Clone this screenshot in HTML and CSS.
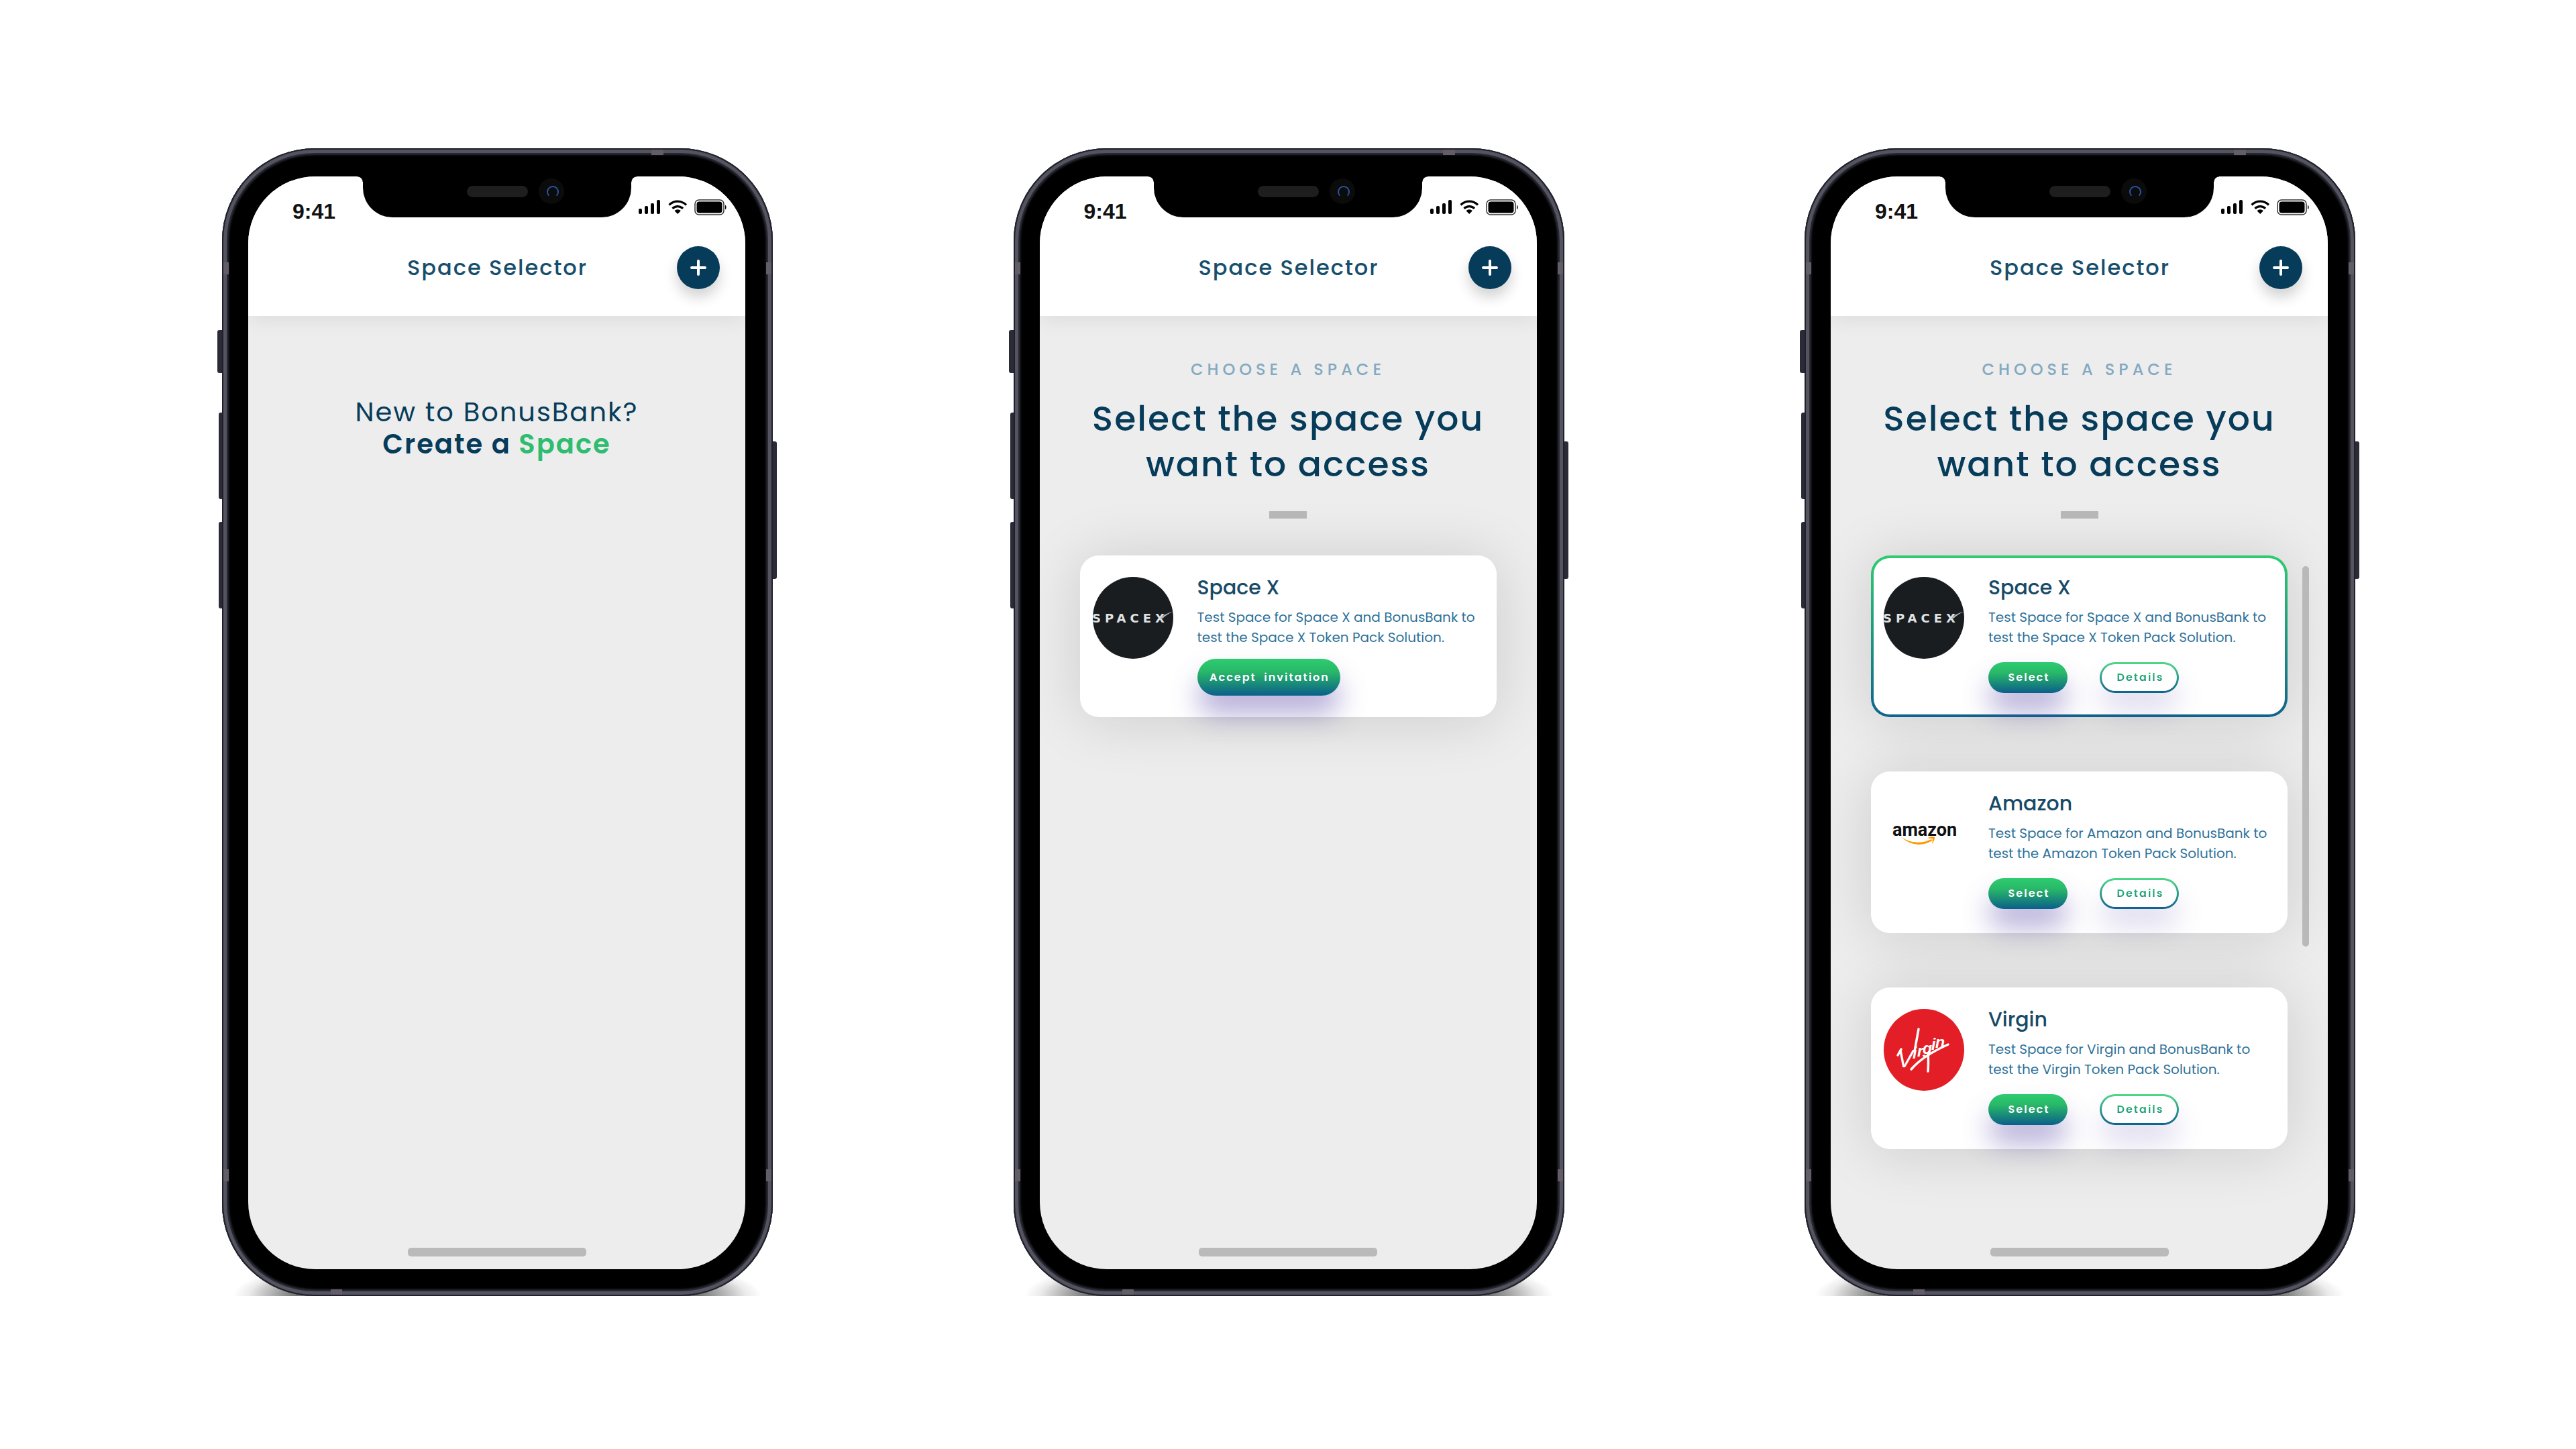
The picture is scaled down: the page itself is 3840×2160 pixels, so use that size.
FILE: index.html
```html
<!DOCTYPE html>
<html lang="en">
<head>
<meta charset="utf-8">
<meta name="viewport" content="width=device-width, initial-scale=1">
<title>Space Selector</title>
<link rel="stylesheet" href="styles.css">
</head>
<body>
<svg class="sprite" aria-hidden="true">
  <defs>
    <symbol id="status-icons" viewBox="0 0 134 26">
      <rect x="1" y="14" width="5" height="8" rx="2"/>
      <rect x="10" y="10" width="5" height="12" rx="2"/>
      <rect x="19" y="6" width="5" height="16" rx="2"/>
      <rect x="28" y="1" width="5" height="21" rx="2"/>
      <path d="M46.500 8.500a18 18 0 0 1 25.500 0M51.500 13.800a11 11 0 0 1 15.500 0" fill="none" stroke="#000" stroke-width="3.200"/>
      <path d="M59.200 22l-4.700-4.700a6.600 6.600 0 0 1 9.400 0z"/>
      <rect x="85" y="1" width="43" height="22" rx="6" fill="none" stroke="#333" stroke-width="1.500"/>
      <rect x="87.500" y="3.500" width="38" height="17" rx="4"/>
      <path d="M130 8.500a4.500 4.500 0 0 1 0 7z"/>
    </symbol>
    <symbol id="plus" viewBox="0 0 24 24">
      <path d="M12 2v20M2 12h20" fill="none" stroke="#fff" stroke-width="4" stroke-linecap="round"/>
    </symbol>
    <clipPath id="disc"><ellipse cx="60" cy="61" rx="60" ry="61"/></clipPath>
    <symbol id="logo-spacex" viewBox="0 0 120 122">
      <g clip-path="url(#disc)">
        <rect width="120" height="122" fill="#191d20"/>
        <text x="-1" y="68" class="logo-text-spacex">SPACEX</text>
        <path d="M100 62Q106 55 120 51.500Q110 56 104 62Z" fill="#aab0b3"/>
      </g>
    </symbol>
    <symbol id="logo-amazon" viewBox="0 0 120 122">
      <text x="13" y="64" class="logo-text-amazon">amazon</text>
      <path d="M26 66Q48 80 71 69L72.500 71Q48 85 26 66Z" fill="#f90"/>
      <path d="M65 67.500Q71 64 76 66Q76 71 72 76Q73 71 73 68.500Q70 67.500 65 67.500Z" fill="#f90"/>
    </symbol>
    <symbol id="logo-virgin" viewBox="0 0 120 122">
      <ellipse cx="60" cy="61" rx="60" ry="61" fill="#e31e26"/>
      <text x="20 43 50 58 71 77" y="87 74 71 67 61 58" class="logo-text-virgin"><tspan class="logo-initial">V</tspan>irgin</text>
      <path d="M41 90Q58 70 96 53M66 66Q67 78 66 93M46 63L52 30M21 69L26 60" fill="none" stroke="#fff" stroke-width="3.500" stroke-linecap="round"/>
    </symbol>
  </defs>
</svg>

<main class="stage">
  <section class="phone">
    <i class="floor-shadow"></i>
    <i class="key key-mute"></i><i class="key key-up"></i><i class="key key-down"></i><i class="key key-power"></i>
    <div class="frame">
      <i class="band band-left-top"></i><i class="band band-right-top"></i><i class="band band-left-low"></i><i class="band band-right-low"></i><i class="band band-top"></i><i class="band band-bottom"></i>
      <div class="screen">
        <div class="notch"><i class="speaker"></i><i class="camera"></i></div>
        <header class="topbar">
          <div class="status"><span>9:41</span><svg class="status-icons" aria-hidden="true"><use href="#status-icons"/></svg></div>
          <div class="nav"><h1>Space Selector</h1><button class="add" type="button" aria-label="Add space"><svg aria-hidden="true"><use href="#plus"/></svg></button></div>
        </header>
        <div class="content welcome">
          <p>New to BonusBank?</p>
          <p class="strong">Create a <a href="#create">Space</a></p>
        </div>
        <i class="home"></i>
      </div>
    </div>
  </section>

  <section class="phone">
    <i class="floor-shadow"></i>
    <i class="key key-mute"></i><i class="key key-up"></i><i class="key key-down"></i><i class="key key-power"></i>
    <div class="frame">
      <i class="band band-left-top"></i><i class="band band-right-top"></i><i class="band band-left-low"></i><i class="band band-right-low"></i><i class="band band-top"></i><i class="band band-bottom"></i>
      <div class="screen">
        <div class="notch"><i class="speaker"></i><i class="camera"></i></div>
        <header class="topbar">
          <div class="status"><span>9:41</span><svg class="status-icons" aria-hidden="true"><use href="#status-icons"/></svg></div>
          <div class="nav"><h1>Space Selector</h1><button class="add" type="button" aria-label="Add space"><svg aria-hidden="true"><use href="#plus"/></svg></button></div>
        </header>
        <div class="content">
          <p class="eyebrow">CHOOSE A SPACE</p>
          <h2>Select the space you<br>want to access</h2>
          <hr>
          <div class="cards">
            <article class="card">
              <svg class="logo" role="img" aria-label="SpaceX"><use href="#logo-spacex"/></svg>
              <div class="info">
                <h3>Space X</h3>
                <p>Test Space for Space X and BonusBank to<br>test the Space X Token Pack Solution.</p>
                <div class="actions"><button class="btn accept" type="button">Accept  invitation</button></div>
              </div>
            </article>
          </div>
        </div>
        <i class="home"></i>
      </div>
    </div>
  </section>

  <section class="phone">
    <i class="floor-shadow"></i>
    <i class="key key-mute"></i><i class="key key-up"></i><i class="key key-down"></i><i class="key key-power"></i>
    <div class="frame">
      <i class="band band-left-top"></i><i class="band band-right-top"></i><i class="band band-left-low"></i><i class="band band-right-low"></i><i class="band band-top"></i><i class="band band-bottom"></i>
      <div class="screen">
        <div class="notch"><i class="speaker"></i><i class="camera"></i></div>
        <header class="topbar">
          <div class="status"><span>9:41</span><svg class="status-icons" aria-hidden="true"><use href="#status-icons"/></svg></div>
          <div class="nav"><h1>Space Selector</h1><button class="add" type="button" aria-label="Add space"><svg aria-hidden="true"><use href="#plus"/></svg></button></div>
        </header>
        <div class="content">
          <p class="eyebrow">CHOOSE A SPACE</p>
          <h2>Select the space you<br>want to access</h2>
          <hr>
          <div class="cards">
            <article class="card selected">
              <svg class="logo" role="img" aria-label="SpaceX"><use href="#logo-spacex"/></svg>
              <div class="info">
                <h3>Space X</h3>
                <p>Test Space for Space X and BonusBank to<br>test the Space X Token Pack Solution.</p>
                <div class="actions"><button class="btn" type="button">Select</button><button class="btn outline" type="button"><span>Details</span></button></div>
              </div>
            </article>
            <article class="card">
              <svg class="logo" role="img" aria-label="Amazon"><use href="#logo-amazon"/></svg>
              <div class="info">
                <h3>Amazon</h3>
                <p>Test Space for Amazon and BonusBank to<br>test the Amazon Token Pack Solution.</p>
                <div class="actions"><button class="btn" type="button">Select</button><button class="btn outline" type="button"><span>Details</span></button></div>
              </div>
            </article>
            <article class="card">
              <svg class="logo" role="img" aria-label="Virgin"><use href="#logo-virgin"/></svg>
              <div class="info">
                <h3>Virgin</h3>
                <p>Test Space for Virgin and BonusBank to<br>test the Virgin Token Pack Solution.</p>
                <div class="actions"><button class="btn" type="button">Select</button><button class="btn outline" type="button"><span>Details</span></button></div>
              </div>
            </article>
            <i class="scrollbar"></i>
          </div>
        </div>
        <i class="home"></i>
      </div>
    </div>
  </section>
</main>
</body>
</html>
```
FILE: styles.css
```css
* { box-sizing: border-box; }

body {
  margin: 0;
  background: #fff;
  color: #063c5a;
  font-family: Poppins, Inter, "Liberation Sans", sans-serif;
}

h1, h2, h3, p { margin: 0; font-weight: 500; }

button { margin: 0; padding: 0; border: 0; font-family: inherit; cursor: pointer; }

.sprite { position: absolute; width: 0; height: 0; }

.stage {
  display: grid;
  grid-template-columns: repeat(3, minmax(0, 821px));
  justify-content: space-between;
  padding: 221px 329px 221px 331px;
}

/* Device */
.phone { position: relative; isolation: isolate; aspect-ratio: 821 / 1711; display: flex; }

.floor-shadow {
  position: absolute;
  z-index: -1;
  left: 16px;
  right: 16px;
  bottom: 0;
  height: 70px;
  background: radial-gradient(ellipse 50% 100% at 50% 100%, rgba(0, 0, 0, .55) 76%, rgba(0, 0, 0, .08) 94%, transparent 100%);
}

.frame {
  position: relative;
  flex: 1;
  display: flex;
  padding: 42px 41px 40px 39px;
  border-radius: 138px;
  background: #000;
  box-shadow: inset 0 0 0 2px #20202a, inset 0 0 0 7px #545360, inset 0 0 3px 10px #2c2c37;
}

.key { position: absolute; z-index: -1; width: 12px; background: #2a2b36; border-radius: 3px; }
.key-mute { left: -7px; top: 271px; height: 64px; }
.key-up { left: -5px; top: 394px; height: 129px; }
.key-down { left: -5px; top: 557px; height: 129px; }
.key-power { right: -6px; top: 437px; height: 205px; }

.band { position: absolute; width: 8px; height: 18px; background: #625d67; }
.band-left-top { left: 2px; top: 170px; }
.band-right-top { right: 2px; top: 170px; }
.band-left-low { left: 2px; bottom: 171px; }
.band-right-low { right: 2px; bottom: 171px; }
.band-top { right: 163px; top: 2px; width: 18px; height: 8px; }
.band-bottom { left: 162px; bottom: 2px; width: 17px; height: 8px; }

.screen {
  position: relative;
  flex: 1;
  min-width: 0;
  display: flex;
  flex-direction: column;
  overflow: hidden;
  border-radius: 100px;
  background: #ededed;
}

.notch {
  position: absolute;
  z-index: 3;
  top: 0;
  left: 50%;
  width: 400px;
  height: 61px;
  margin-left: -200px;
  border-radius: 0 0 44px 44px;
  background: #000;
}
.notch::before, .notch::after {
  content: "";
  position: absolute;
  top: 0;
  width: 8px;
  height: 8px;
}
.notch::before { left: -8px; background: radial-gradient(circle at 0 100%, transparent 7px, #000 8px); }
.notch::after { right: -8px; background: radial-gradient(circle at 100% 100%, transparent 7px, #000 8px); }
.speaker { position: absolute; left: 155px; top: 14px; width: 91px; height: 17px; border-radius: 9px; background: #1e1e1e; }
.camera {
  position: absolute;
  left: 262px;
  top: 3px;
  width: 38px;
  height: 38px;
  border-radius: 50%;
  background: #0b0b0c;
}
.camera::after {
  content: "";
  position: absolute;
  left: 12px;
  top: 11px;
  width: 14px;
  height: 14px;
  border: 2px solid #2b539f;
  border-bottom-color: transparent;
  border-radius: 50%;
}

/* Top bar */
.topbar { position: relative; z-index: 2; background: #fff; box-shadow: 0 4px 30px rgba(0, 0, 0, .08); }

.status {
  display: flex;
  align-items: center;
  justify-content: space-between;
  height: 104px;
  padding: 0 26px 0 66px;
  color: #111;
  font: bold 32px/40px "Liberation Sans", Arial, sans-serif;
}
.status-icons { width: 134px; height: 26px; margin-bottom: 10px; }

.nav {
  display: grid;
  grid-template-columns: 1fr auto 1fr;
  align-items: center;
  padding: 0 38px 40px;
}
.nav h1 { grid-column: 2; padding-left: 2px; font-size: 32px; line-height: 40px; letter-spacing: 2px; color: #174e6c; }
.add {
  justify-self: end;
  display: grid;
  place-items: center;
  width: 64px;
  height: 64px;
  border-radius: 50%;
  background: #063c5a;
  box-shadow: 0 12px 20px rgba(0, 0, 0, .18);
}
.add svg { width: 24px; height: 24px; }

/* Content */
.content { flex: 1; padding: 64px 60px 0; text-align: center; }

.welcome { padding-top: 119px; font-size: 40px; line-height: 48px; letter-spacing: 2px; }
.welcome p { font-weight: 400; }
.welcome .strong { font-weight: 600; }
.welcome a { color: #2ebd70; text-decoration: none; }

.eyebrow { color: #82a9c0; font-size: 24px; line-height: 32px; font-weight: 500; letter-spacing: 6px; }
.content h2 { margin-top: 23px; font-size: 52px; line-height: 68px; letter-spacing: 2px; }
.content hr { width: 56px; height: 11px; margin: 36px auto 55px; border: 0; background: #b9b9b9; }

.cards { position: relative; display: flex; flex-direction: column; gap: 81px; text-align: left; }

.card {
  display: flex;
  gap: 36px;
  padding: 24px 15px 28px;
  border: 4px solid transparent;
  border-radius: 28px;
  background: #fff border-box;
  box-shadow: 0 4px 90px rgba(0, 0, 0, .14);
}
.card.selected {
  background: linear-gradient(#fff, #fff) padding-box, linear-gradient(#2ecc71, #0f628d) border-box;
}
.logo { flex: none; width: 120px; height: 122px; margin-top: 4px; }
.info { flex: 1; min-width: 0; }
.card h3 { font-size: 30px; line-height: 40px; color: #174a67; }
.card p { margin-top: 9px; font-size: 20px; line-height: 30px; font-weight: 400; color: #2f7299; white-space: nowrap; }

.actions { display: flex; align-items: center; gap: 48px; height: 55px; margin-top: 17px; }
.btn {
  width: 118px;
  height: 46px;
  padding-left: 3px;
  border-radius: 28px;
  background: linear-gradient(#2ecc71, #28b868 35%, #0b5f8a);
  box-shadow: 0 28px 40px rgba(84, 64, 165, .42);
  color: #fff;
  font-size: 16px;
  font-weight: 600;
  letter-spacing: 2px;
  white-space: pre;
}
.btn.accept { width: 213px; height: 55px; }
.btn.outline {
  border: 3px solid transparent;
  background: linear-gradient(#fff, #fff) padding-box, linear-gradient(#4fd988, #0f628d) border-box;
  box-shadow: 0 28px 40px rgba(84, 64, 165, .18);
}
.btn.outline span { background: linear-gradient(#2ecc71, #1a7f80); background-clip: text; color: transparent; }

.scrollbar { position: absolute; right: -32px; top: 16px; width: 10px; height: 567px; border-radius: 5px; background: #b9b9b9; }

.home { align-self: center; width: 266px; height: 13px; margin-bottom: 19px; border-radius: 5px; background: #bababa; }

/* Brand lettering */
.logo-text-spacex { font: bold 18px "DejaVu Sans", sans-serif; letter-spacing: 6px; fill: #dfe2e3; }
.logo-text-amazon { font: bold 27px Roboto, sans-serif; fill: #111; }
.logo-text-virgin { font: italic bold 23px "Liberation Sans", sans-serif; fill: #fff; }
.logo-initial { font-size: 36px; font-weight: 400; }
```
